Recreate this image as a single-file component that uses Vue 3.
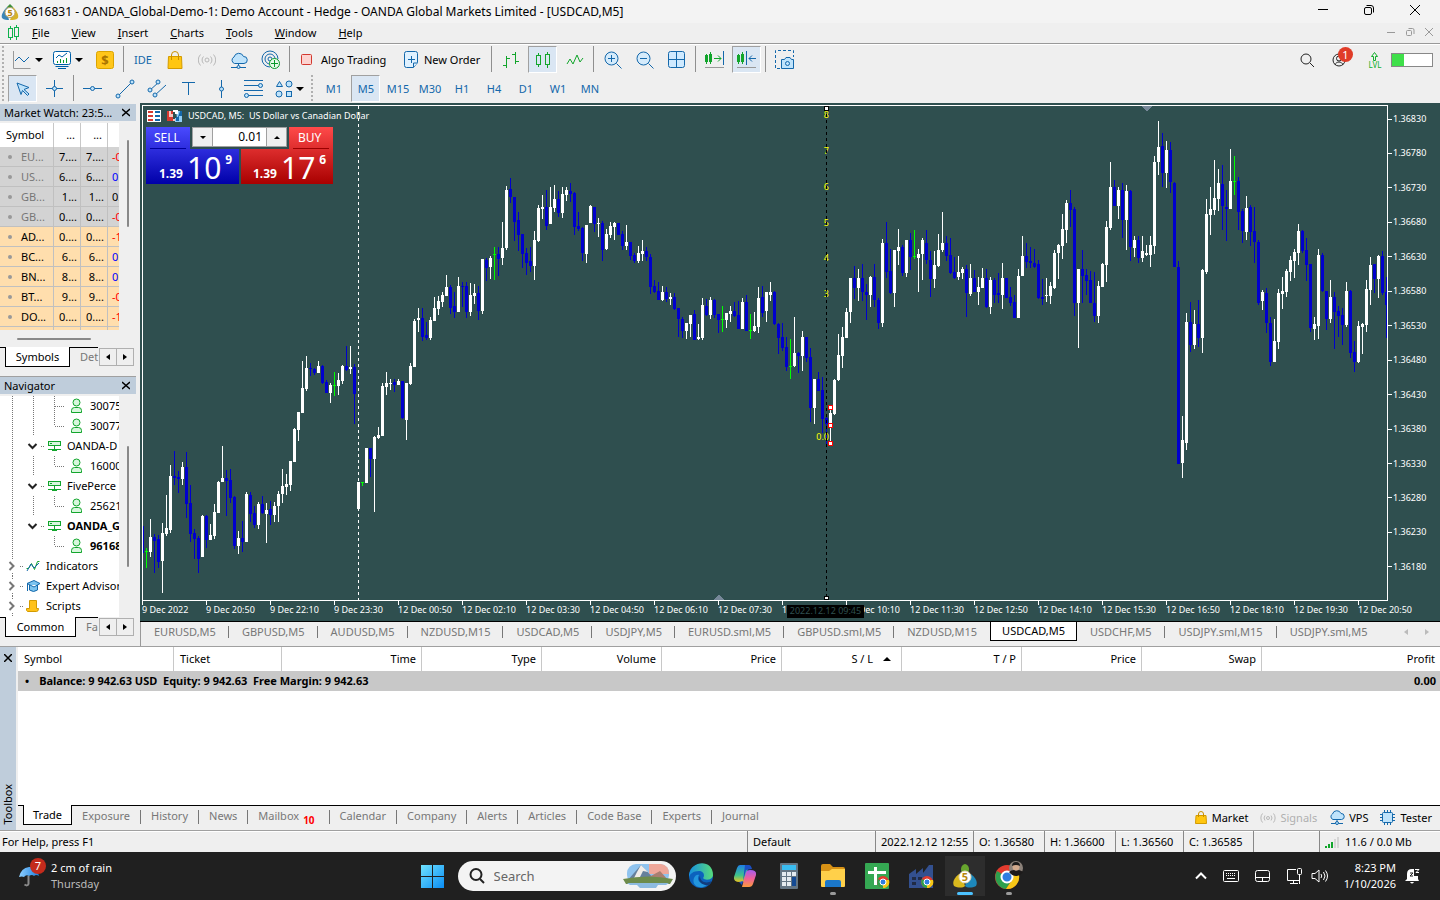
<script setup>
import { ref } from 'vue'

const menus = ['File', 'View', 'Insert', 'Charts', 'Tools', 'Window', 'Help']
const frames = ['M1', 'M5', 'M15', 'M30', 'H1', 'H4', 'D1', 'W1', 'MN']

const quotes = [
  ['EU...', '7....', '7....', '-0', 'off', 'neg'],
  ['US...', '6....', '6....', '0.', 'off', 'pos'],
  ['GB...', '1...', '1...', '0.', 'off', ''],
  ['GB...', '0....', '0....', '-0', 'off', 'neg'],
  ['AD...', '0....', '0....', '-1', 'on', 'neg'],
  ['BC...', '6...', '6...', '0.', 'on', 'pos'],
  ['BN...', '8...', '8...', '0.', 'on', 'pos'],
  ['BT...', '9...', '9...', '-0', 'on', 'neg'],
  ['DO...', '0....', '0....', '-1', 'on', 'neg'],
  ['', '', '', '', 'on', ''],
]

const tree = [
  { kind: 'user', label: '30075', more: true },
  { kind: 'user', label: '30077' },
  { kind: 'server', label: 'OANDA-D' },
  { kind: 'user', label: '16000', inner: true },
  { kind: 'server', label: 'FivePerce' },
  { kind: 'user', label: '25621', inner: true },
  { kind: 'server', label: 'OANDA_G', bold: true },
  { kind: 'user', label: '96168', bold: true, last: true },
  { kind: 'ind', label: 'Indicators' },
  { kind: 'expert', label: 'Expert Advisors' },
  { kind: 'script', label: 'Scripts' },
]

const prices = Array.from({ length: 14 }, (_, i) => (1.3683 - i * 0.0005).toFixed(5))
const times = [
  '9 Dec 2022', '9 Dec 20:50', '9 Dec 22:10', '9 Dec 23:30', '12 Dec 00:50', '12 Dec 02:10', '12 Dec 03:30',
  '12 Dec 04:50', '12 Dec 06:10', '12 Dec 07:30', '12 Dec 08:50', '12 Dec 10:10', '12 Dec 11:30', '12 Dec 12:50',
  '12 Dec 14:10', '12 Dec 15:30', '12 Dec 16:50', '12 Dec 18:10', '12 Dec 19:30', '12 Dec 20:50',
]
const levels = [['8', 118], ['7', 154], ['6', 190], ['5', 226], ['4', 261], ['3', 297], ['0.0', 440]]

/* type (w up, b down, g flat) followed by wick top, body top, body bottom, wick bottom */
const feed = `b526,526,553,553 g548,551,552,568 w519,537,552,557 b534,537,541,573 b535,539,562,568 w523,533,561,593 w495,528,534,536 w465,476,530,533
b451,476,478,485 b471,477,479,493 w462,467,479,485 b452,467,504,518 b485,503,534,542 b529,533,539,559 b536,538,559,573 w515,516,557,557
b515,516,540,548 w524,535,540,540 w504,512,536,539 w481,482,513,513 w446,478,482,482 b470,478,481,516 b469,480,498,503 b496,497,546,549
w531,538,546,554 b521,538,542,552 w492,494,542,542 b492,495,514,522 b506,513,525,528 w502,504,525,529 b496,504,513,514 w503,510,514,543
b501,509,515,525 w502,506,515,522 w491,494,506,522 w469,486,494,503 w474,484,487,495 w461,461,485,491 w428,429,462,462 w412,412,430,441
w361,388,413,413 w356,368,389,391 b363,368,369,376 b368,369,373,375 w361,366,373,373 b365,366,383,384 b380,382,393,393 w383,385,393,403
g372,385,386,396 w373,380,386,395 w365,366,381,384 b346,366,370,371 w346,367,369,374 b364,367,394,424 w482,482,509,510 g482,482,483,486
w448,448,483,483 b448,448,459,477 w436,437,459,512 w427,435,438,439 w383,386,436,436 w372,383,387,395 w379,383,384,390 b379,382,385,392
w379,381,385,385 b381,381,418,419 w383,383,420,440 w363,366,384,385 w319,321,367,367 w308,318,320,332 b308,318,337,341 b322,335,338,340
w317,320,338,340 w297,308,321,321 w296,301,309,315 w292,295,302,307 w275,287,296,296 b285,287,308,314 b292,306,312,318 w277,286,312,312
b282,286,287,307 b282,286,312,318 w283,295,312,316 w284,293,296,304 b286,293,311,320 w259,259,311,314 b258,260,268,281 w256,258,267,279
g247,254,255,280 b247,254,259,276 w222,248,258,265 w186,190,248,250 b178,189,197,203 b197,197,222,241 b212,220,235,251 b234,234,254,268
b248,253,263,275 b247,261,266,272 w231,240,266,280 w205,208,241,242 w195,207,209,219 b190,207,226,230 w187,207,224,224 w185,199,208,212
b191,199,213,217 w187,194,213,218 w187,190,195,201 b183,191,194,202 b192,193,227,235 b212,226,229,231 b227,228,253,261 w225,225,254,263
w205,206,223,223 b207,207,224,232 w218,223,224,237 b221,223,250,261 w229,234,249,250 w222,226,235,238 w222,223,227,240 b223,223,235,235
b231,234,246,250 w225,242,246,250 b242,242,256,260 b253,255,261,263 w246,253,261,263 w240,251,254,261 b247,251,257,261 b254,257,287,294
b280,286,292,293 b282,291,300,300 w286,292,300,301 b287,292,299,302 w293,297,299,305 b293,297,309,310 b308,308,319,337 b317,319,331,338
w323,323,331,339 w315,315,324,337 b310,314,340,340 w324,337,339,340 w298,305,338,340 b299,306,315,316 w297,300,315,319 b299,300,315,318
b314,314,320,333 g306,319,320,332 w313,313,320,328 w306,311,314,322 b302,311,316,317 b301,315,329,329 w298,302,329,329 b295,302,331,331
g314,330,331,339 w312,326,331,332 w287,298,327,333 b286,297,313,317 w292,292,311,322 w282,292,295,301 b291,292,324,325 b323,324,338,354
b323,337,348,351 b337,347,367,371 g339,366,367,379 w317,353,366,367 b352,353,356,373 w331,337,356,371 b337,337,358,362 b348,357,408,422
w379,379,408,424 b372,379,391,391 b377,390,419,433 b416,418,424,447 w406,413,427,445 w379,380,414,415 w334,355,380,381 w327,337,356,368
w308,312,338,338 w278,278,312,323 b266,278,288,299 w269,278,288,301 b264,278,292,301 b284,292,295,320 w276,277,295,307 b264,277,300,307
b298,300,323,329 w239,243,323,327 b222,243,272,278 b249,271,293,294 w250,250,293,307 w229,247,251,265 b245,247,273,276 w240,240,273,277
b233,240,257,270 g230,256,257,259 w249,254,258,292 w238,240,254,280 b230,243,260,264 b251,260,279,297 w251,265,279,288 w234,250,266,267
w212,243,250,252 b236,243,256,261 b238,255,273,274 b257,272,278,279 w256,272,277,280 w267,269,273,279 b265,269,293,317 w264,278,294,296
b270,278,292,292 w277,287,292,305 w268,278,288,288 b269,278,307,308 w277,280,307,314 b278,280,295,303 b273,293,295,303 w263,278,295,309
b278,278,298,298 b287,297,303,306 b295,302,318,318 w269,276,318,318 w236,256,276,276 b243,256,262,268 b247,261,263,268 b249,263,267,268
b260,264,298,299 b279,297,299,305 w278,295,296,302 w282,286,296,304 w250,253,288,289 w244,245,253,279 w214,229,246,259 w200,203,230,243
b190,203,210,227 b207,209,303,316 w269,269,303,348 b250,269,276,303 b269,275,281,295 b271,280,303,303 b272,303,316,322 w281,286,316,323
w263,264,287,287 w221,227,265,282 w162,187,228,230 b180,187,206,206 w187,190,206,219 b183,190,220,238 w185,191,220,250 b190,191,247,261
w236,240,248,257 b236,240,258,263 w236,251,258,262 w245,253,255,256 w236,245,255,267 w156,162,246,254 w121,147,162,175 b133,146,173,187
w141,150,173,188 b142,150,182,193 b182,183,267,267 b261,267,464,464 w416,440,463,478 w313,322,443,450 b302,322,345,352 w310,324,345,349
b300,324,338,347 w269,270,338,353 w199,214,272,274 w187,209,215,235 w160,198,210,215 w169,183,199,211 b165,184,206,230 b190,207,209,241
w149,181,209,209 g156,181,182,195 b177,181,212,230 b209,211,231,243 w196,208,232,240 b205,207,232,246 b207,231,242,263 b240,242,303,305
w290,292,301,310 b288,293,323,333 b317,323,362,366 w319,341,362,362 w289,293,342,349 w277,291,294,309 w269,271,292,297 w256,260,272,281
w249,252,261,278 w224,231,253,265 b230,231,251,253 b238,250,265,281 b264,264,328,332 w317,324,329,340 w249,255,326,339 b253,255,291,292
b291,291,319,330 w280,297,319,323 b292,297,312,349 b306,311,316,337 b308,315,325,345 w282,291,325,327 b290,291,353,358 b341,352,362,372
w321,326,362,363 w323,324,327,354 w280,289,325,332 w257,265,290,305 b264,264,279,293 w255,256,279,298 b251,256,293,295 b277,292,305,338`
const paths = { w: '', b: '', g: '' }
feed.split(/\s+/).forEach((c, i) => {
  const [a, t, u, z] = c.slice(1).split(',').map(Number)
  const x = 142 + i * 4
  paths[c[0]] += `M${x} ${a}h1V${z}h-1z` + `M${x - 1} ${t}h3V${u}h-3z`
})

const chartTabs = ['EURUSD,M5', 'GBPUSD,M5', 'AUDUSD,M5', 'NZDUSD,M15', 'USDCAD,M5', 'USDJPY,M5', 'EURUSD.sml,M5', 'GBPUSD.sml,M5', 'NZDUSD,M15', 'USDCAD,M5', 'USDCHF,M5', 'USDJPY.sml,M15', 'USDJPY.sml,M5']
const columns = ['Symbol', 'Ticket', 'Time', 'Type', 'Volume', 'Price', 'S / L', 'T / P', 'Price', 'Swap', 'Profit']
const toolTabs = ['Trade', 'Exposure', 'History', 'News', 'Mailbox', 'Calendar', 'Company', 'Alerts', 'Articles', 'Code Base', 'Experts', 'Journal']
const volume = ref('0.01')
</script>

<template>
  <div class="app">
    <header class="titlebar">
      <svg class="logo" width="18" height="18" viewBox="0 0 18 18"><path d="M9 1l3 3-1 3H7L6 4z" fill="#3f8f3a" /><path d="M6 4C2 8 0 12 1 15c2 2 5 2 7 2L6 9z" fill="#3a86b8" /><path d="M12 4c4 4 6 8 5 11-2 2-5 2-8 2l3-8z" fill="#d6b32a" /><circle cx="9" cy="9.500" r="5" fill="#fff" stroke="#b9a36a" /><text x="9" y="13" text-anchor="middle" class="five">5</text></svg>
      <h1>9616831 - OANDA_Global-Demo-1: Demo Account - Hedge - OANDA Global Markets Limited - [USDCAD,M5]</h1>
      <div class="winbtns">
        <button aria-label="Minimize"><svg width="12" height="12"><path d="M1 5.500h10" stroke="#000" /></svg></button>
        <button aria-label="Restore"><svg width="12" height="12" fill="none" stroke="#000"><rect x="1.500" y="3.500" width="7" height="7" rx="1.500" /><path d="M3.500 1.500h4.500a2.500 2.500 0 0 1 2.500 2.500v4.500" /></svg></button>
        <button aria-label="Close"><svg width="12" height="12" stroke="#000"><path d="M1 1l10 10M11 1L1 11" /></svg></button>
      </div>
    </header>

    <nav class="menubar">
      <svg width="13" height="16" fill="none" stroke="#0db14b"><path d="M3.500 1v3M3.500 12v3M9.500 0v2M9.500 12v3" /><rect x="1.500" y="3.500" width="4" height="9" /><rect x="7.500" y="2.500" width="4" height="9" /></svg>
      <a v-for="m in menus" :key="m" href="#"><u>{{ m[0] }}</u>{{ m.slice(1) }}</a>
      <div class="childbtns">
        <button aria-label="Minimize chart"><svg width="9" height="10" stroke="#999"><path d="M0 4.500h8" /></svg></button>
        <button aria-label="Restore chart"><svg width="9" height="10" fill="none" stroke="#999"><rect x="0.500" y="2.500" width="5" height="5" rx="1" /><path d="M2.500 0.500h4a1.500 1.500 0 0 1 1.500 1.500v4" /></svg></button>
        <button aria-label="Close chart"><svg width="9" height="10" stroke="#999"><path d="M0 0l8 8M8 0L0 8" /></svg></button>
      </div>
    </nav>

    <div class="tools">
      <div class="toolrow">
        <i class="grip"></i>
        <button class="wide" aria-label="Line studies"><svg width="20" height="20" fill="none" stroke="#1468ab"><path d="M1.500 1v17.500h17" stroke="#999" /><path d="M3 11l4-4 5 5 5-5" /></svg><b class="drop"></b></button>
        <button class="wide" aria-label="Profiles"><svg width="20" height="20" fill="none" stroke="#0060a8"><rect x="1.500" y="1.500" width="17" height="13" rx="2" fill="#fff" /><path d="M4 8l3-3 3 2 5-4" /><path d="M5.500 11v2M8.500 9v4M11.500 10v3M14.500 8v5" stroke="#0a9a2a" /><path d="M3.500 16.500h13M6 18.500h8" /></svg><b class="drop"></b></button>
        <button class="dollar" aria-label="Market"><svg width="18" height="18"><rect x="0.500" y="0.500" width="17" height="17" rx="2" fill="#ffc61a" stroke="#dba400" /><text x="9" y="14" text-anchor="middle" class="cash">$</text></svg></button>
        <i class="sep"></i>
        <button class="blue">IDE</button>
        <button aria-label="Store"><svg width="16" height="18"><path d="M1.500 5.500h13l.5 12H1z" fill="#ffc610" stroke="#d39b00" /><path d="M4.500 9V4a3.500 3.500 0 0 1 7 0v5" fill="none" stroke="#c89000" /></svg></button>
        <button aria-label="Signals"><svg width="18" height="14" fill="none" stroke="#b8b8b8"><circle cx="9" cy="7" r="2" /><path d="M5.500 3.500a5 5 0 0 0 0 7M12.500 3.500a5 5 0 0 1 0 7M2.500 1.500a8 8 0 0 0 0 11M15.500 1.500a8 8 0 0 1 0 11" /></svg></button>
        <button aria-label="VPS"><svg width="18" height="18" fill="#bfe3fb" stroke="#1468ab"><path d="M4.500 12.500a3.500 3.500 0 0 1-.5-6.500 5 5 0 0 1 9.500-.5 3.500 3.500 0 0 1 .5 7z" /><path d="M8.500 12.500v3M1 16.500h6M10 16.500h6" fill="none" /><circle cx="8.500" cy="16" r="1.500" /></svg></button>
        <button aria-label="Strategy tester"><svg width="20" height="20" fill="none" stroke="#1468ab"><path d="M9 17A8 8 0 1 1 17 9M9 14a5 5 0 1 1 5-5M9 11a2 2 0 1 1 2-2" /><circle cx="13.500" cy="13.500" r="5" fill="#e9fbe9" stroke="#0a9a2a" /><path d="M13.500 10v7M10 13.500h7" stroke="#0a9a2a" /></svg></button>
        <i class="sep"></i>
        <button class="text"><svg width="12" height="12"><rect x="0.500" y="0.500" width="10" height="10" rx="1" fill="#fcd3d0" stroke="#d3382f" /></svg>Algo Trading</button>
        <button class="text order"><svg width="14" height="18" fill="#dff1ff" stroke="#1468ab"><path d="M2.500 0.500h9a2 2 0 0 1 2 2v9l-4 5h-7a2 2 0 0 1-2-2v-12a2 2 0 0 1 2-2z" /><path d="M7.500 5v7M4 8.500h7M9.500 16v-4h4" /></svg>New Order</button>
        <i class="sep"></i>
        <button aria-label="Bar chart"><svg width="18" height="18" fill="none" stroke="#12a52c"><path d="M4.500 5v12M1 14.500h3.500M4.500 7.500H8M13.500 1v12M10 3.500h3.500M13.500 10.500H17" /></svg></button>
        <button class="lit" aria-label="Candlesticks"><svg width="14" height="16" fill="none" stroke="#12a52c"><rect x="0.500" y="3.500" width="4" height="9" /><path d="M2.500 1v2.500M2.500 12.500V15M11.500 0v2.500M11.500 12.500V16" /><rect x="9.500" y="2.500" width="4" height="10" /></svg></button>
        <button aria-label="Line chart"><svg width="18" height="14" fill="none" stroke="#12a52c"><path d="M1 11l3-5 3 5 4-9 3 7 3-4" /></svg></button>
        <i class="sep"></i>
        <button aria-label="Zoom in"><svg width="18" height="18" fill="#d5ebfb" stroke="#1468ab"><circle cx="7.500" cy="7.500" r="6.500" /><path d="M12.500 12.500l5 5M4 7.500h7M7.500 4v7" /></svg></button>
        <button aria-label="Zoom out"><svg width="18" height="18" fill="#d5ebfb" stroke="#1468ab"><circle cx="7.500" cy="7.500" r="6.500" /><path d="M12.500 12.500l5 5M4 7.500h7" /></svg></button>
        <button aria-label="Tile windows"><svg width="18" height="18" fill="#cfeaff" stroke="#1468ab"><rect x="0.500" y="0.500" width="16" height="16" rx="2" /><path d="M8.500 1v16M1 8.500h16" /></svg></button>
        <i class="sep"></i>
        <button aria-label="Shift chart"><svg width="20" height="18" fill="none" stroke="#12a52c"><rect x="0.500" y="4.500" width="2" height="6" /><rect x="4.500" y="3.500" width="2" height="7" /><path d="M1.500 3v10M5.500 1v12M9 7.500h7M13 4.500l3 3-3 3" /><path d="M18.500 0v14" stroke="#1468ab" /><path d="M0 16.500h19" stroke="#999" /></svg></button>
        <button class="lit" aria-label="Auto scroll"><svg width="20" height="18" fill="none" stroke="#12a52c"><rect x="0.500" y="4.500" width="2" height="6" /><rect x="4.500" y="3.500" width="2" height="7" /><path d="M1.500 3v10M5.500 1v12" /><path d="M9.500 0v14M12 7.500h7M15 4.500l-3 3 3 3" stroke="#1468ab" /><path d="M0 16.500h19" stroke="#999" /></svg></button>
        <i class="sep"></i>
        <button aria-label="Screenshot"><svg width="20" height="20" fill="none" stroke="#1468ab"><path d="M5 18.500H0.500v-18h18V7" stroke-dasharray="3 2" /><path d="M6.500 9.500h3l1.500-2h4l1.500 2h2v9h-12z" fill="#bfe3fb" /><circle cx="12.500" cy="13.500" r="2" /></svg></button>
        <div class="account">
          <button aria-label="Search"><svg width="14" height="14" fill="none" stroke="#222"><circle cx="6" cy="6" r="5" /><path d="M10 10l4 4" /></svg></button>
          <button class="user" aria-label="Account"><svg width="14" height="14" fill="none" stroke="#222"><circle cx="7" cy="7" r="6" /><circle cx="7" cy="5.500" r="2.500" /><path d="M3 12c1-4 7-4 8 0" /></svg><em>1</em></button>
          <button class="lvl"><svg width="10" height="9" fill="none" stroke="#12b02c"><path d="M3.500 8.500v-4h-2l3-4 3 4h-2v4z" /></svg>LVL</button>
          <span class="battery"><i></i></span>
        </div>
      </div>
      <div class="toolrow">
        <i class="grip"></i>
        <button class="lit first" aria-label="Cursor"><svg width="14" height="14" fill="#bfe3fb" stroke="#1468ab"><path d="M1 1l12 4.500-5 2 5 4.500-1.500 1.500-5-5-1.500 4z" /></svg></button>
        <button aria-label="Crosshair"><svg width="18" height="18" fill="#bfe3fb" stroke="#1468ab"><path d="M8.500 0v17M0 8.500h17" /><circle cx="8.500" cy="8.500" r="2" /></svg></button>
        <i class="sep"></i>
        <button aria-label="Horizontal line"><svg width="20" height="8" fill="#bfe3fb" stroke="#1468ab"><path d="M0 3.500h19" /><circle cx="9.500" cy="3.500" r="2" /></svg></button>
        <button aria-label="Trendline"><svg width="20" height="20" fill="#bfe3fb" stroke="#1468ab"><path d="M2 18L18 2" /><circle cx="3" cy="17" r="2" /><circle cx="17" cy="3" r="2" /></svg></button>
        <button aria-label="Channel"><svg width="20" height="20" fill="#bfe3fb" stroke="#1468ab"><path d="M2 12L12 3M7 17l12-11" /><circle cx="3" cy="11" r="2" /><circle cx="11" cy="3" r="2" /><circle cx="8" cy="16" r="2" /></svg></button>
        <button aria-label="Text"><svg width="14" height="14" fill="none" stroke="#1468ab"><path d="M0 0.500h13M6.500 0.500V13" /></svg></button>
        <button aria-label="Vertical line"><svg width="8" height="18" fill="#bfe3fb" stroke="#1468ab"><path d="M4.500 0v18" /><circle cx="4.500" cy="9" r="2" /></svg></button>
        <button aria-label="Fibonacci"><svg width="20" height="18" fill="#bfe3fb" stroke="#1468ab"><path d="M1 0.500h19M1 5.500h19M1 10.500h19M1 15.500h19" /><circle cx="17.500" cy="5.500" r="2" /><circle cx="3.500" cy="15.500" r="2" /></svg></button>
        <button class="wide" aria-label="Shapes"><svg width="18" height="18" fill="#bfe3fb" stroke="#1468ab"><path d="M4.500 1.500l3 5h-6z" /><circle cx="14" cy="4" r="3" /><circle cx="4" cy="14" r="3" /><rect x="11.500" y="11.500" width="5" height="5" /></svg><b class="drop"></b></button>
        <i class="grip mid"></i>
        <button v-for="f in frames" :key="f" class="blue" :class="{ lit: f === 'M5' }">{{ f }}</button>
      </div>
    </div>

    <main class="work">
      <aside class="side">
        <section class="pane">
          <h2>Market Watch: 23:5...<button aria-label="Close Market Watch"><svg width="8" height="9" stroke="#000" stroke-width="1.500"><path d="M0 1l8 7M8 1L0 8" /></svg></button></h2>
          <div class="panebody watch">
            <table>
              <colgroup><col class="c1"><col class="c2"><col class="c2"><col></colgroup>
              <thead><tr><th>Symbol</th><th>...</th><th>...</th><th></th></tr></thead>
              <tbody>
                <tr v-for="(q, i) in quotes" :key="i" :class="q[4]">
                  <td>{{ q[0] }}</td><td>{{ q[1] }}</td><td>{{ q[2] }}</td><td :class="q[5]">{{ q[3] }}</td>
                </tr>
              </tbody>
            </table>
            <i class="vbar"></i>
          </div>
          <i class="hbar"></i>
          <div class="sidetabs">
            <button class="active">Symbols</button><button class="more">Det</button>
            <button class="arrow left" aria-label="Scroll left"></button><button class="arrow right" aria-label="Scroll right"></button>
          </div>
        </section>
        <section class="pane nav">
          <h2>Navigator<button aria-label="Close Navigator"><svg width="8" height="9" stroke="#000" stroke-width="1.500"><path d="M0 1l8 7M8 1L0 8" /></svg></button></h2>
          <div class="panebody treebox">
            <ul>
              <li v-for="(t, i) in tree" :key="i" :class="[t.kind, { bold: t.bold }]">
                <svg v-if="t.kind === 'user'" width="68" height="20" fill="none" stroke="#777" stroke-dasharray="1 1"><path d="M12.500 0v20" /><path v-if="!t.last" d="M33.500 0v20" /><path d="M54.500 0v10" /><path v-if="t.more" d="M54.500 10v10" /><path d="M55 10.500h10" /></svg>
                <svg v-else-if="t.kind === 'server'" width="47" height="20" fill="none" stroke="#777" stroke-dasharray="1 1"><path d="M12.500 0v20" /><path d="M41 10.500h4" /><path d="M28.500 8l4 4 4-4" stroke="#222" stroke-width="2" stroke-dasharray="none" /></svg>
                <svg v-else width="26" height="20" fill="none" stroke="#777" stroke-dasharray="1 1"><path d="M12.500 0v4M12.500 17v3M20 10.500h4" /><path d="M9.500 6l4 4-4 4" stroke="#777" stroke-width="2" stroke-dasharray="none" /></svg>
                <svg v-if="t.kind === 'user'" width="14" height="16" fill="#d9f7de" stroke="#12a52c"><circle cx="7.500" cy="4.500" r="3.500" /><path d="M2.500 14.500v-2q0-3 3-3h4q3 0 3 3v2z" /></svg>
                <svg v-else-if="t.kind === 'server'" width="14" height="12" fill="#d9f7de" stroke="#12a52c"><rect x="1.500" y="1.500" width="12" height="4" /><path d="M3 3.500h2M7.500 6v3M1 9.500h13" /><path d="M5 10h5" stroke-width="2" /></svg>
                <svg v-else-if="t.kind === 'ind'" width="14" height="12" fill="none" stroke="#12a52c"><path d="M0.500 8.500h2l3-5 3 6 3-8h2" /><path d="M1 11L5 4l3 4 5-5" stroke="#1468ab" /></svg>
                <svg v-else-if="t.kind === 'expert'" width="14" height="12" fill="#7cc4f0" stroke="#1468ab"><path d="M3.500 5v5q4 3 8 0V5M1 3.500l7-3 6 3L8 7z" /><path d="M1.500 4v7" /></svg>
                <svg v-else width="14" height="12" fill="#ffc21a" stroke="#d39b00"><path d="M3.500 0.500h7v8h2q0 3-2 3h-9q-1.500-1-1-3h3z" /></svg>
                <span>{{ t.label }}</span>
              </li>
            </ul>
            <i class="vbar"></i>
          </div>
          <div class="sidetabs">
            <button class="active common">Common</button><button class="more">Fa</button>
            <button class="arrow left" aria-label="Scroll left"></button><button class="arrow right" aria-label="Scroll right"></button>
          </div>
        </section>
      </aside>

      <section class="chartcol">
        <div class="chart">
          <svg class="plot" viewBox="142 105 1246 496" preserveAspectRatio="none" shape-rendering="crispEdges">
            <path d="M358.500 106V600" stroke="#fff" stroke-dasharray="3 3" />
            <path :d="paths.b" fill="#0000cd" />
            <path :d="paths.w" fill="#fff" />
            <path :d="paths.g" fill="#00ff00" />
            <text v-for="l in levels" :key="l[0]" x="829" :y="l[1]" text-anchor="end" class="level">{{ l[0] }}</text>
            <path d="M826.500 108V600" stroke="#000" stroke-dasharray="3 3" />
            <path d="M824.500 106.500h4v4h-4zM824.500 596.500h4v3h-4z" fill="#fff" stroke="#000" />
            <path d="M828.500 405.500h4v4h-4zM828.500 423.500h4v4h-4zM828.500 441.500h4v4h-4z" fill="#fff" stroke="#f00" />
            <path d="M1141 106h11l-5 5h-1zM713 600h11l-5-5h-1z" fill="#778899" />
            <path d="M142.500 105.500h1245v495h-1245z" fill="none" stroke="#fff" />
          </svg>
          <ol class="prices"><li v-for="p in prices" :key="p">{{ p }}</li></ol>
          <ol class="times"><li v-for="t in times" :key="t">{{ t }}</li></ol>
          <span class="cursor-time">2022.12.12 09:45</span>
          <div class="caption">
            <svg width="14" height="12"><path d="M0 0h14v12H0z" fill="#fff" /><path d="M1 2h5M1 6h5M1 10h5" stroke="#d83a30" stroke-width="2" /><path d="M8 2h5M8 6h5M8 10h5" stroke="#1468ab" stroke-width="2" /></svg>
            <svg width="16" height="12"><path d="M0 1h6v8h4v2H0z" fill="#f6c4c0" /><path d="M9 1h6v11H8V8h2z" fill="#8fcdf7" /><path d="M0 1h2v6h4v4H0zM4 1h2v3H4z" fill="#d83a30" /><path d="M13 1h2v5h-3v5H9V7h2z" fill="#1468ab" /><path d="M6 0h5v4H8V2H6z" fill="#fff" /></svg>
            <span>USDCAD, M5:&nbsp; US Dollar vs Canadian Dollar</span>
          </div>
          <form class="deal" @submit.prevent>
            <button class="sell" type="button"><span class="name">SELL</span><span class="quote"><small>1.39</small><strong>10</strong><sup>9</sup></span></button>
            <button class="buy" type="button"><span class="name">BUY</span><span class="quote"><small>1.39</small><strong>17</strong><sup>6</sup></span></button>
            <div class="lots">
              <button type="button" class="down" aria-label="Decrease volume"></button>
              <input v-model="volume" aria-label="Volume">
              <button type="button" class="up" aria-label="Increase volume"></button>
            </div>
          </form>
        </div>
        <div class="charttabs">
          <button v-for="(c, i) in chartTabs" :key="i" :class="{ active: i === 9, before: i === 8 }">{{ c }}</button>
          <span class="scroll"><b></b><b></b></span>
        </div>
      </section>
    </main>

    <section class="toolbox">
      <div class="strip"><button aria-label="Close Toolbox"><svg width="8" height="8" stroke="#000" stroke-width="1.500"><path d="M0 0l8 8M8 0L0 8" /></svg></button><span>Toolbox</span></div>
      <div class="boxmain">
        <div class="tradearea">
          <table class="trade">
            <colgroup><col class="w1"><col class="w2"><col class="w3"><col v-for="n in 7" :key="n" class="w4"><col></colgroup>
            <thead><tr><th v-for="(c, i) in columns" :key="i">{{ c }}<b v-if="c === 'S / L'" class="sort"></b></th></tr></thead>
            <tbody><tr><td colspan="10"><i>•</i>Balance: 9 942.63 USD&nbsp; Equity: 9 942.63&nbsp; Free Margin: 9 942.63</td><td>0.00</td></tr></tbody>
          </table>
        </div>
        <div class="boxtabs">
          <button v-for="(t, i) in toolTabs" :key="t" :class="{ active: i === 0 }">{{ t }}<em v-if="t === 'Mailbox'">10</em></button>
          <div class="services">
            <a href="#"><svg width="12" height="14"><path d="M1 4.500h10l.5 8H.5z" fill="#ffc610" stroke="#d39b00" /><path d="M3.500 6V3a2.500 2.500 0 0 1 5 0v3" fill="none" stroke="#c89000" /></svg>Market</a>
            <a href="#" class="dim"><svg width="16" height="12" fill="none" stroke="#b8b8b8"><circle cx="8" cy="6" r="1.500" /><path d="M5 3.500a4 4 0 0 0 0 5M11 3.500a4 4 0 0 1 0 5M2.500 1.500a7 7 0 0 0 0 9M13.500 1.500a7 7 0 0 1 0 9" /></svg>Signals</a>
            <a href="#"><svg width="16" height="16" fill="#bfe3fb" stroke="#1468ab"><path d="M4 9.500A3 3 0 0 1 3.500 4a4.500 4.500 0 0 1 8.500-.5 3 3 0 0 1 .5 6z" /><path d="M8 9.500v3M2 13.500h4.500M9.500 13.500H14" /><circle cx="8" cy="13" r="1.500" /></svg>VPS</a>
            <a href="#"><svg width="16" height="16" stroke="#1468ab"><path d="M4.500 0v15M7.500 0v15M10.500 0v15M0 4.500h15M0 7.500h15M0 10.500h15" /><rect x="2.500" y="2.500" width="10" height="10" rx="1" fill="#bfe3fb" /></svg>Tester</a>
          </div>
        </div>
      </div>
    </section>

    <footer class="status">
      <span class="s0">For Help, press F1</span><span class="s1">Default</span><span class="s2">2022.12.12 12:55</span><span class="s3">O: 1.36580</span><span class="s3">H: 1.36600</span><span class="s4">L: 1.36560</span><span class="s5">C: 1.36585</span><span class="s6"></span>
      <span class="s7"><svg width="14" height="12"><path d="M1 10v2M4 8v4M7 6v6" stroke="#12a52c" stroke-width="2" /><path d="M10 3v9M13 1v11" stroke="#d5d5d5" stroke-width="2" /></svg>11.6 / 0.0 Mb</span>
    </footer>

    <div class="taskbar">
      <div class="weather">
        <svg width="20" height="22"><defs><linearGradient id="um" x2="1" y2="0"><stop stop-color="#8fd0ff" /><stop offset="1" stop-color="#1b7fe0" /></linearGradient></defs><path d="M0 12Q2 3 10 2t10 9q-3-2-5 0-2-2-5 0-3-2-5 1-2-1-5 0z" fill="url(#um)" /><path d="M9.500 11v8q-1 2.500-4 .5" fill="none" stroke="#8a8a8a" stroke-width="2" /></svg>
        <em>7</em>
        <p>2 cm of rain<small>Thursday</small></p>
      </div>
      <div class="apps">
        <button aria-label="Start"><svg width="24" height="24"><defs><linearGradient id="win" x2="1" y2="1"><stop stop-color="#6fe3ff" /><stop offset="1" stop-color="#0a8df5" /></linearGradient></defs><path d="M1 1h11v11H1zM13 1h11v11H13zM1 13h11v11H1zM13 13h11v11H13z" fill="url(#win)" /></svg></button>
        <label class="search"><svg width="16" height="16" fill="none" stroke="#222" stroke-width="2"><circle cx="7" cy="6.500" r="5.500" /><path d="M11 11l4 4" /></svg><input placeholder="Search" aria-label="Search">
          <svg width="50" height="26"><rect x="4" y="1" width="42" height="20" rx="9" fill="#8fc3ee" /><path d="M26 1h12a9 9 0 0 1 8 10H26z" fill="#eea79a" /><path d="M4 18L18 2l15 16z" fill="#66809c" /><path d="M18 2l7 7-5-1-4 8-5-1 3-6z" fill="#f0ece8" /><path d="M26 14l11-6 9 10H22z" fill="#a97e70" /><path d="M0 16q25-5 50 0l-3 5H3z" fill="#6d8b4b" /><path d="M4 20h42l-3 2h-8l-2 3H17l-3-3H7z" fill="#8dbbe0" /></svg>
        </label>
        <button aria-label="Edge"><svg width="24" height="26"><defs><linearGradient id="ed" x2="1" y2="0"><stop stop-color="#1690e0" /><stop offset="1" stop-color="#57dc7b" /></linearGradient></defs><circle cx="12" cy="13" r="12" fill="#0c62bd" /><path d="M0 12C2-3 24-4 24 12c0 5-8 6-10 3 2-2 1-7-4-7-6 0-9 3-10 6z" fill="url(#ed)" /><path d="M10 12c-3 5 1 10 9 9-7 7-17 2-14-6 1-3 4-4 5-3z" fill="#2396dd" /><path d="M11 13c0 6 6 8 12 5l-3 4C13 23 8 18 11 13z" fill="#123c7c" /></svg></button>
        <button aria-label="Copilot"><svg width="24" height="26"><defs><linearGradient id="c1" x2="0" y2="1"><stop stop-color="#1e7fe8" /><stop offset=".6" stop-color="#3fc48a" /><stop offset="1" stop-color="#f3c51c" /></linearGradient><linearGradient id="c2" x2="0" y2="1"><stop stop-color="#a45cf0" /><stop offset=".5" stop-color="#f0609a" /><stop offset="1" stop-color="#fb9a3c" /></linearGradient></defs><path d="M7 2h9l-4 15q-1 3-5 2-7 0-6-5L4 5q1-3 3-3z" fill="url(#c1)" /><path d="M12 2h4q2 0 3 4l-6 1-4 15-3-3 4-1z" fill="#1b4fc4" /><path d="M17 7q7 0 6 5l-3 9q-1 3-4 3H9l4-15q1-2 4-2z" fill="url(#c2)" /></svg></button>
        <button aria-label="Calculator"><svg width="20" height="26"><rect x="1" y="0" width="18" height="26" rx="1" fill="#637584" /><rect x="3" y="2" width="14" height="5" fill="#39bdf2" /><path d="M3 9h4v4H3zM8 9h4v4H8zM13 9h4v4h-4zM3 14h4v4H3zM8 14h4v4H8zM3 19h4v4H3zM8 19h4v4H8z" fill="#e4ebf0" /><path d="M13 14h4v9h-4z" fill="#134a94" /></svg></button>
        <button class="run" aria-label="File Explorer"><svg width="26" height="26"><path d="M1 3q0-2 2-2h7l3 3h10q2 0 2 2v4H1z" fill="#d89216" /><path d="M1 8h8l3-2h13v17q0 1-1 1H2q-1 0-1-1z" fill="#ffd04a" /><path d="M5 24v-5q0-2 2-2h12q2 0 2 2v5z" fill="#1b77c9" /></svg></button>
        <button aria-label="Sheets"><svg width="26" height="26"><rect x="1" width="24" height="26" rx="1" fill="#35a853" /><path d="M11.500 4v18M4 9.500h18" stroke="#fff" stroke-width="3" /><circle cx="19" cy="19" r="6" fill="#e33b2e" /><path d="M19 19l-5-3a6 6 0 0 0 5 9z" fill="#2da04e" /><path d="M19 17h6a6 6 0 0 1-6 8z" fill="#f7c716" /><circle cx="19" cy="19" r="3" fill="#2f7de1" stroke="#fff" /></svg></button>
        <button aria-label="Factory"><svg width="26" height="26"><path d="M1 25V11l7-5v5l7-6v5l6-8h4v23z" fill="#33508f" /><path d="M4 14h4v3H4zM10 14h4v3h-4zM4 19h4v3H4z" fill="#202b45" /><circle cx="19" cy="19" r="6" fill="#e33b2e" /><path d="M19 19l-5-3a6 6 0 0 0 5 9z" fill="#2da04e" /><path d="M19 17h6a6 6 0 0 1-6 8z" fill="#f7c716" /><circle cx="19" cy="19" r="3" fill="#2f7de1" stroke="#fff" /></svg></button>
        <button class="run on" aria-label="MetaTrader"><svg width="24" height="26"><path d="M12 1c4 1 5 5 3 9H9C7 6 8 2 12 1z" fill="#67a52e" /><path d="M6 11c-5 4-7 8-5 12 4 2 9 2 11 0l-3-9z" fill="#d9b91e" /><path d="M18 11c5 4 7 8 5 12-4 2-9 2-11 0l3-9z" fill="#1d88bb" /><circle cx="12" cy="14" r="6" fill="#fff" stroke="#e5d8b4" /><text x="12" y="18" text-anchor="middle" class="five big">5</text></svg></button>
        <button class="run" aria-label="Chrome"><svg width="28" height="30"><circle cx="12" cy="16" r="12" fill="#e33b2e" /><path d="M12 16L2 10a12 12 0 0 0 9 18l6-9z" fill="#2da04e" /><path d="M12 11h11a12 12 0 0 1-12 17l6-9z" fill="#f7c716" /><circle cx="12" cy="16" r="5.500" fill="#2f7de1" stroke="#fff" stroke-width="2" /><circle cx="21" cy="7" r="7" fill="#8b8179" /><circle cx="21" cy="6" r="3.500" fill="#d2a98c" /><path d="M17 5q0-4 4-4t4 4q-4-2-8 0zM14 11q2-2 5-2l2 1 3-1q3 1 4 2-3 4-7 4t-7-4z" fill="#1c1a1a" /></svg></button>
      </div>
      <div class="tray">
        <button aria-label="Hidden icons"><svg width="12" height="8" fill="none" stroke="#fff" stroke-width="2"><path d="M1 6.500l5-5 5 5" /></svg></button>
        <svg width="16" height="12" fill="none" stroke="#fff"><rect x="0.500" y="0.500" width="15" height="11" rx="1" /><path d="M3 3.500h10M3 5.500h10" stroke-dasharray="1 1" /><path d="M4 8.500h8" /></svg>
        <svg width="15" height="12" fill="none" stroke="#fff"><rect x="0.500" y="0.500" width="14" height="11" rx="2" /><path d="M0 7.500h15M7.500 7.500V12" /></svg>
        <svg width="17" height="16" fill="none" stroke="#fff"><path d="M10 1.500H1.500v11h12V9M7.500 12.500v3M4 15.500h8" /><rect x="11.500" y="0.500" width="4" height="6" rx="1" /><path d="M13.500 7v9" /></svg>
        <svg class="sound" width="17" height="14" fill="none" stroke="#fff"><path d="M1 4.500h3l4-3.500v12L4 9.500H1zM10 5q1.500 2 0 4M12.500 3q3 4 0 8M14.500 1.500q4 5.500 0 11" /></svg>
        <p>8:23 PM<br>1/10/2026</p>
        <svg width="15" height="16" fill="#fff"><path d="M2 11V6q0-5 5-5h2v7h4v3l1 2H0zM5 14h4q-2 3-4 0z" /><path d="M10 1.500h4l-3 3h3" fill="none" stroke="#fff" /><path d="M5 5h3L5 8h3" fill="none" stroke="#222" /></svg>
      </div>
    </div>
  </div>
</template>

<style>
html, body, #app { height: 100%; }
body { margin: 0; overflow: hidden; }
</style>

<style scoped>
.app { height: 100%; display: flex; flex-direction: column; background: #efefef; color: #000; font: 11px/14px "Noto Sans", "Open Sans", sans-serif; }
* { box-sizing: border-box; }
button { border: 0; background: none; padding: 0; margin: 0; font: inherit; color: inherit; display: flex; align-items: center; justify-content: center; }
a { color: inherit; text-decoration: none; }
h1, h2, p, ul, ol { margin: 0; padding: 0; font: inherit; list-style: none; }
svg { flex: none; }
.five { font: bold 9px "Noto Sans", sans-serif; fill: #b8860b; }
.five.big { font-size: 11px; }
.cash { font: bold 13px "Noto Sans", sans-serif; fill: #a97400; }

.titlebar { height: 23px; flex: none; background: #f3f3f3; display: flex; align-items: center; padding-left: 1px; }
.titlebar h1 { margin-left: 5px; font-size: 12px; white-space: nowrap; }
.winbtns { margin: 0 2px 3px auto; display: flex; }
.winbtns button { width: 46px; height: 20px; }
.menubar { height: 20px; flex: none; display: flex; align-items: center; padding-left: 7px; }
.menubar > svg { margin-right: 1px; }
.menubar a { padding: 0 11px; }
.childbtns { margin-left: auto; display: flex; gap: 10px; padding-right: 6px; }
.tools { flex: none; border-top: 1px solid #999; box-shadow: inset 0 1px #fff; height: 60px; padding-top: 1px; }
.toolrow { height: 29px; display: flex; align-items: flex-start; padding-top: 1px; }
.toolrow > button { width: 32px; height: 28px; }
.grip { width: 3px; height: 27px; margin: 0 0 0 2px; background: radial-gradient(circle at 1px 1px, #b0b0b0 1px, transparent 1px) 0 0 / 3px 4px; }
.grip + button { margin-left: 1px; }
.grip.mid { margin: 0 3px 0 2px; }
.grip.mid + button { margin-left: 1px; }
.toolrow > .first { margin-left: 2px; }
.toolrow > .wide { width: 40px; justify-content: flex-start; padding-left: 6px; gap: 3px; }
.drop { border: 4px solid transparent; border-top-color: #000; border-bottom: 0; }
.toolrow > .dollar { margin-left: 3px; }
.toolrow > .text { width: 103px; gap: 8px; padding-left: 8px; justify-content: flex-start; white-space: nowrap; }
.toolrow > .order { width: 93px; gap: 6px; }
.sep { width: 6px; height: 26px; background: linear-gradient(#8f8f8f, #8f8f8f) 2px 0 / 1px 100% no-repeat; }
.blue { color: #1468ab; }
.lit { background: linear-gradient(#dae6f3, #dae6f3) 2px 1px / 27px 25px no-repeat; position: relative; }
.lit::after { content: ""; position: absolute; inset: 0 2px 1px 1px; border: 1px solid #fff; border-top-color: #a0a0a0; border-left-color: #a0a0a0; }
.account { margin-left: auto; display: flex; align-items: center; height: 28px; padding-right: 7px; }
.account button { width: 32px; height: 28px; }
.account .user { position: relative; }
.user em { position: absolute; left: 15px; top: 1px; width: 15px; height: 15px; border-radius: 8px; background: #e03c28; color: #fff; font-style: normal; font-size: 11px; line-height: 15px; text-align: center; }
.account .lvl { flex-direction: column; width: 40px; font-size: 8px; line-height: 8px; color: #12b02c; }
.battery { width: 42px; height: 14px; border: 1px solid #888; background: #fff; margin-left: -4px; }
.battery i { display: block; width: 12px; height: 12px; background: #3fe04a; }

.work { flex: 1 1 0; min-height: 0; display: flex; }
.side { width: 140px; flex: none; display: flex; flex-direction: column; }
.pane { width: 136px; display: flex; flex-direction: column; padding-top: 1px; }
.pane h2 { height: 17px; margin-bottom: 2px; background: #bfcddb; display: flex; align-items: center; justify-content: space-between; padding: 0 6px 0 4px; flex: none; }
.panebody { position: relative; background: linear-gradient(#fff, #fff) 0 0 / 119px 100% no-repeat; }
.watch { height: 207px; overflow: hidden; }
.watch table { width: 119px; table-layout: fixed; border-collapse: separate; border-spacing: 0; }
.watch .c1 { width: 54px; }
.watch .c2 { width: 27px; }
.watch th { height: 24px; padding: 0; font-weight: 400; text-align: right; border-right: 1px solid #c8c8c8; padding-right: 5px; }
.watch th:first-child { text-align: left; padding-left: 6px; padding-right: 0; }
.watch td { height: 20px; padding: 0 3px 0 0; text-align: right; border: solid #c0c0c0; border-width: 0 1px 1px 0; white-space: nowrap; overflow: hidden; }
.watch td:first-child { text-align: left; padding-left: 21px; position: relative; }
.watch td:first-child::before { content: ""; position: absolute; left: 8px; top: 8px; width: 4px; height: 4px; border-radius: 2px; background: #999; }
.watch td:last-child { text-align: left; padding-left: 4px; border-right: 0; }
.watch th:last-child { border-right: 0; }
.off td { background: #d3d3d3; }
.off td:first-child { color: #777; }
.on td { background: #ffdead; }
.watch .neg { color: #f00; }
.watch .pos { color: #00f; }
.vbar { position: absolute; right: 7px; top: 17px; width: 2px; height: 87px; background: #888; border-radius: 1px; }
.hbar { width: 74px; height: 2px; margin: 8px 0 7px 17px; background: #888; border-radius: 1px; }
.sidetabs { height: 20px; display: flex; background: linear-gradient(#000, #000) 0 0 / 98px 1px no-repeat; flex: none; }
.sidetabs .active { width: 65px; margin-left: 5px; background: #fff; border: 1px solid #000; border-top: 0; }
.sidetabs .common { width: 71px; }
.sidetabs .more { flex: 1; color: #777; overflow: hidden; justify-content: flex-start; padding-left: 10px; }
.arrow { width: 18px; height: 18px; margin-top: 1px; border: 1px solid #b0b0b0; }
.arrow + .arrow { margin: 1px 2px 0 -1px; }
.arrow::after { content: ""; border: 3px solid transparent; }
.arrow.left::after { border-right: 4px solid #000; border-left: 0; }
.arrow.right::after { border-left: 4px solid #000; border-right: 0; }
.nav { flex: 1; min-height: 0; margin-top: 9px; border-top: 1px solid #a0a0a0; padding-top: 0; padding-bottom: 9px; }
.treebox { flex: 1; min-height: 0; overflow: hidden; }
.treebox ul { width: 119px; overflow: hidden; }
.treebox .vbar { top: 50px; height: 121px; }
.treebox li { height: 20px; display: flex; align-items: center; gap: 6px; white-space: nowrap; }
.treebox li svg:first-child { margin-right: -6px; }
.treebox .user { gap: 7px; }

.bold { font-weight: 700; }

.chartcol { flex: 1; min-width: 0; display: flex; flex-direction: column; }
.chart { flex: 1; min-height: 0; position: relative; background: #2f4f4f; border-bottom: 1px solid #000; color: #fff; font-size: 9px; line-height: 12px; display: grid; grid-template: minmax(0, 1fr) 20px / minmax(0, 1fr) 52px; padding: 2px 0 0 2px; }
.plot { width: 100%; height: 100%; display: block; }
.level { font: 9px "Noto Sans", sans-serif; fill: #ff0; }
.prices { display: flex; flex-direction: column; justify-content: space-between; padding: 8px 0 28px; }
.prices li { display: flex; align-items: center; gap: 1px; }
.prices li::before { content: ""; width: 4px; height: 1px; background: #fff; }
.times { grid-column: 1 / 3; display: flex; overflow: hidden; }
.times li { flex: 0 0 64px; white-space: nowrap; padding-top: 3px; background: linear-gradient(#fff, #fff) 0 0 / 1px 4px no-repeat; }
.cursor-time { position: absolute; left: 647px; bottom: 3px; width: 77px; height: 13px; background: #000; color: #2f4f4f; text-align: center; }
.caption { position: absolute; left: 7px; top: 7px; display: flex; align-items: center; gap: 6px; white-space: nowrap; }
.caption span { margin-left: -1px; }
.deal { position: absolute; left: 6px; top: 24px; width: 188px; height: 57px; color: #fff; }
.sell, .buy { position: absolute; top: 0; height: 57px; width: 93px; display: block; text-align: left; }
.sell { left: 0; background: linear-gradient(#4a4aff, #0000a8); clip-path: polygon(0 0, 44px 0, 44px 22px, 100% 22px, 100% 100%, 0 100%); }
.buy { left: 95px; width: 92px; background: linear-gradient(#ff4a4a, #a80000); clip-path: polygon(48px 0, 100% 0, 100% 100%, 0 100%, 0 22px, 48px 22px); }
.name { display: block; font-size: 12px; line-height: 21px; padding-left: 8px; height: 22px; background: linear-gradient(#00009a, #00009a) 4px 21px / 36px 1px no-repeat; }
.buy .name { padding-left: 57px; background: linear-gradient(#9a0000, #9a0000) 52px 21px / 36px 1px no-repeat; }
.quote { display: flex; height: 35px; padding: 0 0 0 13px; align-items: flex-end; border-top: 1px solid transparent; }
.buy .quote { padding-left: 12px; }
.quote small { font: bold 12px/20px "Noto Sans", sans-serif; }
.quote strong { font: 30px/33px "Noto Sans", sans-serif; margin-left: 4px; }
.quote sup { font: bold 12px/14px "Noto Sans", sans-serif; align-self: flex-start; margin: 3px 0 0 4px; }
.lots { position: absolute; left: 46px; top: 0; width: 95px; height: 20px; display: flex; border: 1px solid #a0a0a0; background: #fff; }
.lots button { width: 19px; background: #efefef; }
.lots input { flex: 1; min-width: 0; border: solid #a0a0a0; border-width: 0 1px; padding: 0 4px 0 0; font: 12px/18px "Noto Sans", sans-serif; text-align: right; outline: 0; }
.down::after, .up::after { content: ""; border: 3px solid transparent; }
.down::after { border-top: 3px solid #000; border-bottom: 0; }
.up::after { border-bottom: 3px solid #000; border-top: 0; }

.charttabs { height: 24px; flex: none; display: flex; border-left: 1px solid #999; color: #777; padding: 0 0 4px 0; overflow: hidden; }
.charttabs button { padding: 0 13px; height: 19px; white-space: nowrap; background: linear-gradient(#777, #777) 100% 4px / 1px 12px no-repeat; }
.charttabs .active { background: #fff; color: #000; border: 1px solid #000; border-top: 0; padding: 0 11px; }
.charttabs .before, .charttabs button:nth-last-child(2) { background: none; }
.charttabs .active ~ button { padding: 0 14px 0 13px; }
.scroll { margin-left: auto; display: flex; gap: 17px; align-items: center; padding-right: 11px; }
.scroll b { border: 3px solid transparent; border-right: 4px solid #bbb; border-left: 0; }
.scroll b + b { border-left: 4px solid #bbb; border-right: 0; }

.toolbox { height: 185px; flex: none; display: flex; border: solid #a0a0a0; border-width: 1px 0; }
.strip { width: 16px; margin-right: 2px; background: #bfcddb; display: flex; flex-direction: column; justify-content: space-between; align-items: center; padding: 7px 0 5px; }
.strip span { writing-mode: vertical-rl; transform: rotate(180deg); }
.boxmain { flex: 1; min-width: 0; display: flex; flex-direction: column; }
.tradearea { flex: 1; background: #fff; }
.trade { width: 100%; table-layout: fixed; border-collapse: separate; border-spacing: 0; }
.w1 { width: 156px; }
.w2 { width: 108px; }
.w3 { width: 140px; }
.w4 { width: 120px; }
.trade th { height: 24px; padding: 0 5px; font-weight: 400; text-align: right; border-right: 1px solid #c8c8c8; }
.trade th:nth-child(-n + 2) { text-align: left; padding-left: 6px; }
.trade th:last-child { border: 0; }
.trade td { height: 20px; padding: 0 4px 0 7px; background: #c8c8c8; font-weight: 700; }
.trade td:last-child { text-align: right; }
.trade td i { font-style: normal; margin-right: 10px; }
.sort { display: inline-block; margin: 0 5px 2px 10px; border: 4px solid transparent; border-bottom-color: #000; border-top: 0; }
.boxtabs { height: 25px; flex: none; border-top: 1px solid #000; display: flex; color: #777; }
.boxtabs > button { height: 19px; padding: 0 11px 0 10px; background: linear-gradient(#777, #777) 100% 4px / 1px 14px no-repeat; white-space: nowrap; }
.boxtabs > button:nth-last-child(2) { background: none; }
.boxtabs > .active { height: 20px; margin: -1px 0 0 5px; background: #fff; color: #000; border: 1px solid #000; border-top: 0; padding: 0 9px; }
.boxtabs em { color: #f00; font: bold 10px/10px "Noto Sans", sans-serif; margin: 8px 4px 0 4px; }
.services { margin-left: auto; display: flex; gap: 12px; padding-right: 8px; color: #000; align-items: center; }
.services a { display: flex; align-items: center; gap: 5px; }
.services a + a { gap: 4px; }
.services .dim { color: #b0b0b0; }

.status { height: 21px; flex: none; display: flex; background: #efefef; box-shadow: inset 0 1px #fff; }
.status span { border-left: 1px solid #888; padding-left: 5px; line-height: 20px; display: flex; align-items: center; white-space: nowrap; }
.status .s0 { flex: 1; border: 0; padding-left: 2px; }
.s1 { width: 128px; }
.s2 { width: 98px; }
.s3 { width: 71px; }
.s4 { width: 68px; }
.s5 { width: 70px; }
.s6 { width: 66px; }
.s7 { width: 121px; gap: 6px; }

.taskbar { height: 48px; flex: none; background: #202020; color: #fff; display: grid; grid-template-columns: 1fr auto 1fr; align-items: center; }
.weather { position: relative; display: flex; align-items: center; padding-left: 19px; }
.weather em { position: absolute; left: 30px; top: -2px; width: 16px; height: 16px; border-radius: 8px; background: #c42b1c; font: 11px/16px "Noto Sans", sans-serif; text-align: center; }
.weather p { margin-left: 12px; line-height: 16px; }
.weather small { display: block; font-size: 11px; color: #bbb; }
.apps { display: flex; align-items: center; }
.apps > button { width: 44px; height: 40px; position: relative; }
.search { width: 218px; height: 30px; border-radius: 15px; background: #f3f3f3; display: flex; align-items: center; padding: 0 3px 0 11px; margin: 0 3px 0 4px; }
.search input { flex: 1; min-width: 0; border: 0; background: none; margin-left: 9px; padding: 0; font: 13px/18px "Noto Sans", sans-serif; outline: 0; }
.search input::placeholder { color: #666; opacity: 1; }
.apps .on { background: linear-gradient(#2d2d2d, #2d2d2d) 2px 0 / 40px 40px no-repeat; }
.run::after { content: ""; position: absolute; bottom: 1px; width: 6px; height: 3px; border-radius: 2px; background: #9a9a9a; }
.on::after { width: 16px; background: #4cc2ff; }
.tray { display: flex; justify-content: flex-end; align-items: center; gap: 16px; padding-right: 20px; }
.tray .sound { margin-left: -8px; }
.tray p { text-align: right; line-height: 16px; margin-right: -7px; }
</style>
